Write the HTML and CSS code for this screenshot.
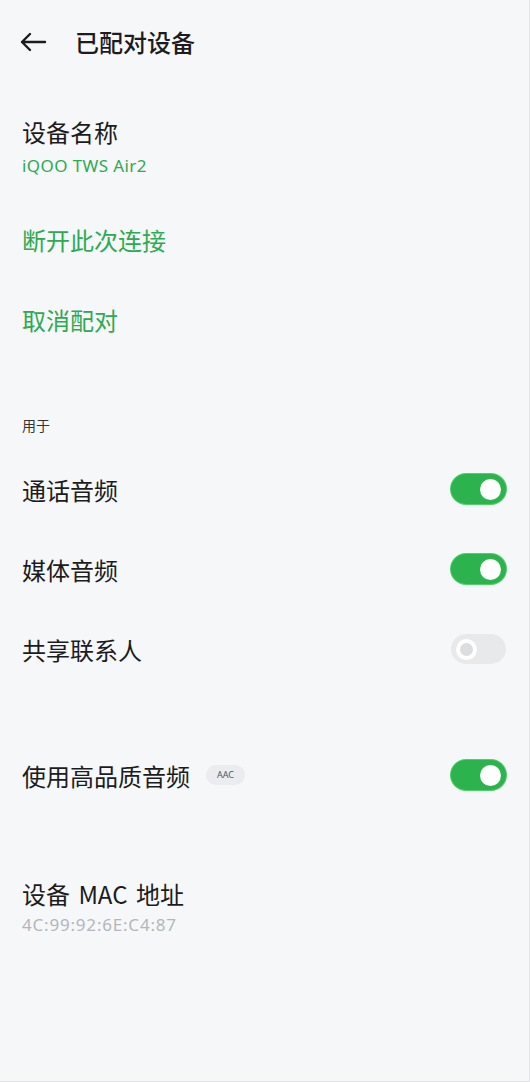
FILE: index.html
```html
<!DOCTYPE html>
<html lang="zh-CN">
<head>
    <meta charset="UTF-8">
    <meta name="viewport" content="width=device-width, initial-scale=1.0">
    <title>已配对设备</title>
    <link rel="stylesheet" href="styles.css">
</head>
<body>
    <div class="page">
        <header class="topbar">
            <svg class="back" width="28" height="20" viewBox="0 0 28 20">
                <path d="M3 10 H26 M11 2 L3 10 L11 18" fill="none" stroke="#1c1c1e" stroke-width="2.4" stroke-linecap="round" stroke-linejoin="round"/>
            </svg>
            <h1>已配对设备</h1>
        </header>

        <div class="info">
            <div class="info-title">设备名称</div>
            <div class="info-value green">iQOO TWS Air2</div>
        </div>

        <div class="row green">断开此次连接</div>
        <div class="row green">取消配对</div>

        <div class="section-label">用于</div>

        <div class="row">
            <span>通话音频</span>
            <span class="switch on"><span class="knob"></span></span>
        </div>
        <div class="row">
            <span>媒体音频</span>
            <span class="switch on"><span class="knob"></span></span>
        </div>
        <div class="row">
            <span>共享联系人</span>
            <span class="switch off"><span class="knob"></span></span>
        </div>

        <div class="row row-hq">
            <span class="label-with-badge">使用高品质音频 <span class="badge">AAC</span></span>
            <span class="switch on"><span class="knob"></span></span>
        </div>

        <div class="info info-mac">
            <div class="info-title">设备 MAC 地址</div>
            <div class="mac-value">4C:99:92:6E:C4:87</div>
        </div>
    </div>
</body>
</html>
```

FILE: styles.css
```css
body {
    margin: 0;
    background: #f6f7f9;
    font-family: "Noto Sans CJK SC", "Noto Sans", sans-serif;
    color: #1c1c1e;
}
.page {
    width: 530px;
    min-height: 100vh;
    box-sizing: border-box;
    padding: 0 23px 0 22px;
    border-right: 1px solid #e2e3e6;
    border-bottom: 1px solid #e2e3e6;
}
.topbar {
    height: 84px;
    display: flex;
    align-items: center;
    gap: 28px;
    margin-left: -3px;
}
.topbar h1 {
    margin: 0;
    font-size: 24px;
    font-weight: 500;
    line-height: 32px;
}
.info {
    margin-top: 32px;
}
.info-title {
    font-size: 24px;
    line-height: 32px;
    word-spacing: 3px;
}
.info-value {
    margin-top: 7px;
    font-family: "Noto Sans", sans-serif;
    font-size: 17px;
    line-height: 22px;
    letter-spacing: 0.4px;
}
.green {
    color: #2eaa51;
}
.row {
    height: 80px;
    display: flex;
    align-items: center;
    justify-content: space-between;
    font-size: 24px;
}
.info + .row {
    margin-top: 22px;
}
.section-label {
    margin-top: 56px;
    margin-bottom: 14px;
    font-size: 14px;
    line-height: 20px;
    color: #333;
}
.row-hq {
    margin-top: 46px;
}
.label-with-badge {
    display: flex;
    align-items: center;
    gap: 16px;
}
.badge {
    font-family: "Noto Sans", sans-serif;
    font-size: 9px;
    line-height: 20px;
    padding: 0 11px;
    border-radius: 10px;
    background: #eaecef;
    color: #555;
}
.switch {
    width: 55px;
    height: 30px;
    box-sizing: border-box;
    border-radius: 15px;
    display: flex;
    align-items: center;
    padding: 0 5px;
}
.switch.on {
    background: #2db34e;
    box-shadow: 0 0 0 1px #4fd06a;
    justify-content: flex-end;
}
.switch.off {
    background: #e8e9eb;
    justify-content: flex-start;
}
.knob {
    width: 21px;
    height: 21px;
    border-radius: 50%;
    background: #fff;
}
.switch.off .knob {
    width: 13px;
    height: 13px;
    background: #dcdddf;
    border: 4px solid #fff;
}
.info-mac {
    margin-top: 63px;
}
.mac-value {
    margin-top: 4px;
    font-family: "Noto Sans", sans-serif;
    font-size: 17px;
    line-height: 22px;
    letter-spacing: 0.8px;
    color: #b4b6ba;
}
```
